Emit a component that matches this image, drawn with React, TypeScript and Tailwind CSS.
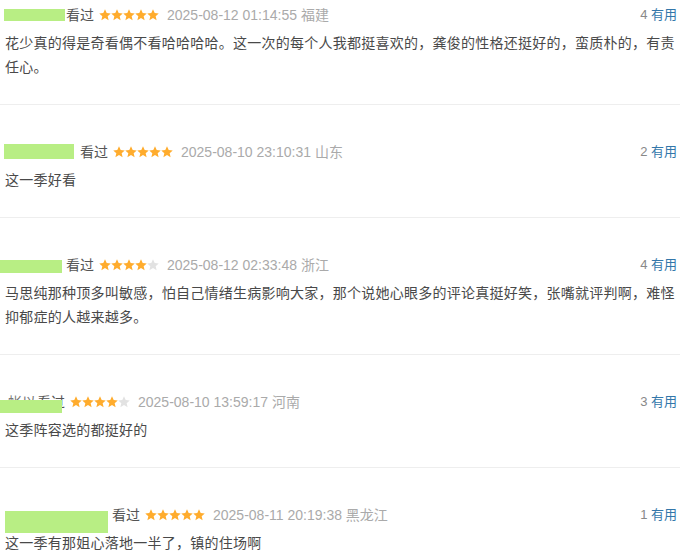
interface Review {
  name: string
  nameW: number
  cover: { left: number; top: number; w: number; h: number }
  stars: number
  time: string
  place: string
  useful: number
  text: string
}

// names are masked in the screenshot, only row 4 peeks out above its mask
const reviews: Review[] = [
  {
    name: '',
    nameW: 66,
    cover: { left: 4, top: 4, w: 61, h: 12 },
    stars: 5,
    time: '2025-08-12 01:14:55',
    place: '福建',
    useful: 4,
    text: '花少真的得是奇看偶不看哈哈哈哈。这一次的每个人我都挺喜欢的，龚俊的性格还挺好的，蛮质朴的，有责任心。'
  },
  {
    name: '',
    nameW: 80,
    cover: { left: 4, top: 2, w: 70, h: 15 },
    stars: 5,
    time: '2025-08-10 23:10:31',
    place: '山东',
    useful: 2,
    text: '这一季好看'
  },
  {
    name: '',
    nameW: 66,
    cover: { left: 0, top: 5, w: 62, h: 13 },
    stars: 4,
    time: '2025-08-12 02:33:48',
    place: '浙江',
    useful: 4,
    text: '马思纯那种顶多叫敏感，怕自己情绪生病影响大家，那个说她心眼多的评论真挺好笑，张嘴就评判啊，难怪抑郁症的人越来越多。'
  },
  {
    name: '帐以',
    nameW: 37,
    cover: { left: 0, top: 8, w: 62, h: 13 },
    stars: 4,
    time: '2025-08-10 13:59:17',
    place: '河南',
    useful: 3,
    text: '这季阵容选的都挺好的'
  },
  {
    name: '',
    nameW: 112,
    cover: { left: 5, top: 6, w: 103, h: 22 },
    stars: 5,
    time: '2025-08-11 20:19:38',
    place: '黑龙江',
    useful: 1,
    text: '这一季有那姐心落地一半了，镇的住场啊'
  }
]

function Star({ on }: { on: boolean }) {
  return (
    <svg width="12" height="12" viewBox="1 1 22 22" className="shrink-0">
      <path
        d="M12 1.5l3.1 6.9 7.4.7-5.6 5 1.7 7.4L12 17.7l-6.6 3.8 1.7-7.4-5.6-5 7.4-.7z"
        fill={on ? '#ffac2d' : '#e2e2e2'}
      />
    </svg>
  )
}

function ReviewItem({ r, first }: { r: Review; first: boolean }) {
  return (
    <div className={`border-b border-[#eeeeee] pb-[25px] ${first ? 'pt-[5px]' : 'pt-[37px]'}`}>
      <div className="relative flex h-5 items-center text-[14px] pr-[3px]">
        <span className="inline-block shrink-0 whitespace-nowrap pl-[8px] text-[#777]" style={{ width: r.nameW }}>
          {r.name}
        </span>
        <span className="text-[#555]">看过</span>
        <span className="ml-[5px] flex">
          {[0, 1, 2, 3, 4].map(i => (
            <Star key={i} on={i < r.stars} />
          ))}
        </span>
        <span className="ml-[8px] text-[#aaaaaa]">
          {r.time} {r.place}
        </span>
        <span className="ml-auto text-[13px]">
          <span className="text-[#888]">{r.useful}</span> <span className="text-[#3377aa]">有用</span>
        </span>
        <span
          className="absolute bg-[#b8ee84]"
          style={{ left: r.cover.left, top: r.cover.top, width: r.cover.w, height: r.cover.h }}
        />
      </div>
      <p className="mt-[6px] pl-[5px] text-[14px] leading-[24px] tracking-[0.25px] text-[#494949]">{r.text}</p>
    </div>
  )
}

export default function App() {
  return (
    <div className="h-[556px] w-[680px] overflow-hidden bg-white font-['Liberation_Sans','Noto_Sans_CJK_SC',sans-serif]">
      {reviews.map((r, i) => (
        <ReviewItem key={i} r={r} first={i === 0} />
      ))}
    </div>
  )
}
